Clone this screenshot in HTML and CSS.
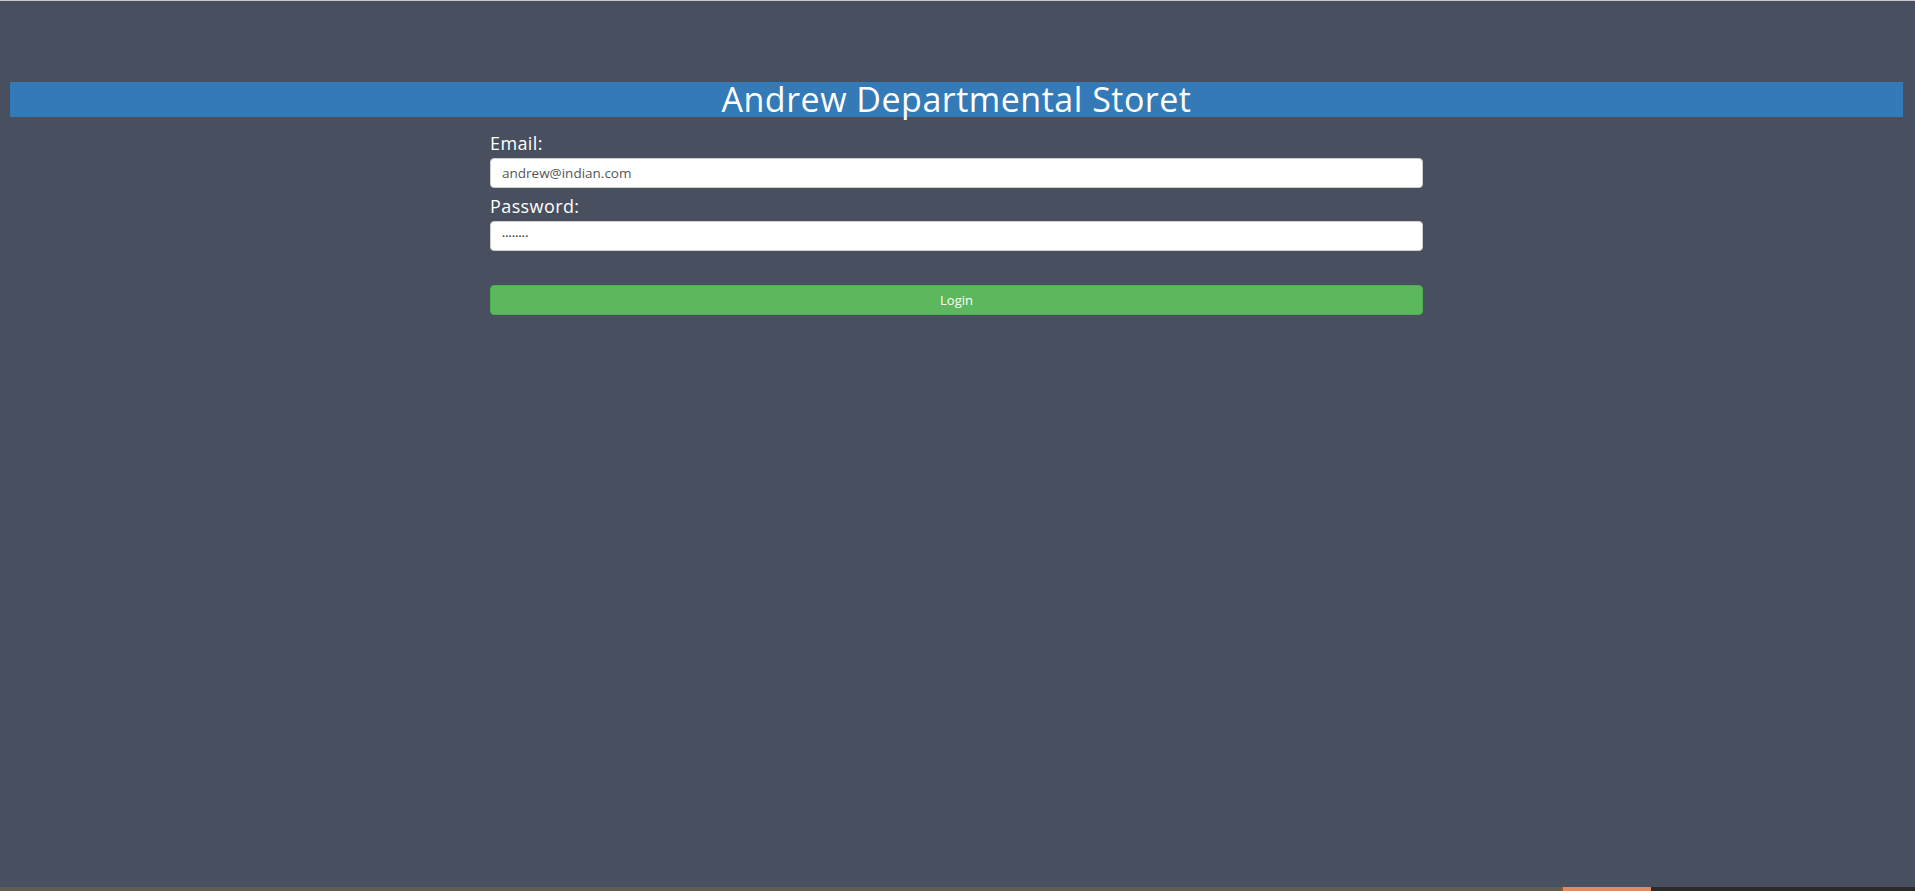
FILE: index.html
```html
<!DOCTYPE html>
<html>
<head>
<meta charset="utf-8">
<link rel="stylesheet" href="styles.css">
</head>
<body>
<div class="page">
  <div class="topline"></div>
  <main class="main">
    <h1 class="banner">Andrew Departmental Storet</h1>
    <form class="form">
      <label class="label">Email:</label>
      <div class="input">andrew@indian.com</div>
      <label class="label">Password:</label>
      <div class="input pass">••••••••</div>
      <div class="btn">Login</div>
    </form>
  </main>
  <div class="taskbar">
    <span class="seg s1"></span><span class="seg s2"></span><span class="seg s3"></span><span class="seg s4"></span>
  </div>
</div>
</body>
</html>
```
FILE: styles.css
```css
* { box-sizing: border-box; }
html, body { margin: 0; padding: 0; }
body {
  background: #484f5e;
  font-family: "Open Sans", "DejaVu Sans", sans-serif;
  color: #fff;
}
.page {
  height: 891px;
  display: flex;
  flex-direction: column;
}
.topline { height: 1px; background: #c9c9c9; }
.main { flex: 1; padding: 81px 12px 0 10px; }
.banner {
  margin: 0;
  height: 35px;
  background: #337ab7;
  font-weight: 400;
  font-size: 34px;
  line-height: 35px;
  text-align: center;
  letter-spacing: 0.5px;
  color: #fff;
}
.form {
  width: 933px;
  margin: 0 auto;
  padding-top: 15px;
  display: flex;
  flex-direction: column;
}
.label {
  font-size: 18px;
  letter-spacing: 0.4px;
  line-height: 22px;
  height: 26px;
  padding-bottom: 4px;
}
.input {
  height: 30px;
  background: #fff;
  border: 1px solid #ccc;
  border-radius: 4px;
  color: #555;
  font-size: 13.5px;
  line-height: 28px;
  padding: 0 11px;
  margin-bottom: 7px;
}
.pass { font-size: 8px; letter-spacing: 0.3px; color: #444; }
.btn {
  margin-top: 27px;
  height: 30px;
  background: #5cb85c;
  border: 1px solid #4cae4c;
  border-radius: 4px;
  font-size: 13px;
  line-height: 28px;
  text-align: center;
  color: #fff;
}
.taskbar { height: 4px; display: flex; background: #5f5d52; }
.seg { display: block; height: 4px; }
.s1 { width: 1561px; background: #5f5d52; }
.s2 { width: 2px; background: #a4502f; }
.s3 { width: 88px; background: #e08a63; }
.s4 { flex: 1; background: #2b2b2b; }
```
